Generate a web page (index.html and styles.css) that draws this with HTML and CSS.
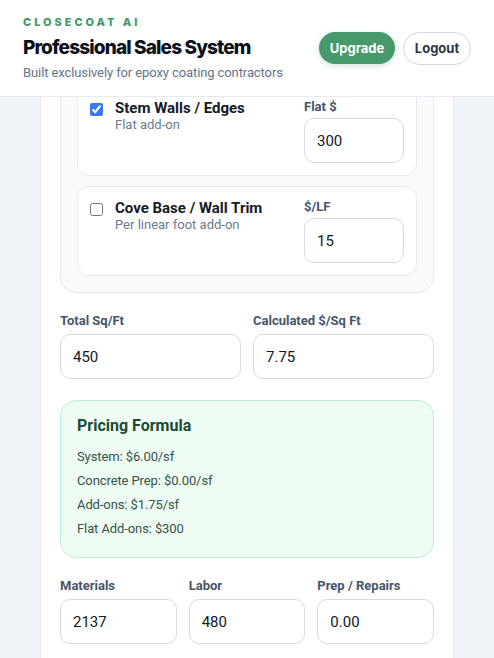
FILE: index.html
```html
<!DOCTYPE html>
<html lang="en">
<head>
<meta charset="utf-8">
<title>CloseCoat AI</title>
<link rel="stylesheet" href="styles.css">
</head>
<body>
<header class="topbar">
  <div class="brand">
    <div class="eyebrow">CLOSECOAT AI</div>
    <h1 class="title">Professional Sales System</h1>
    <p class="subtitle">Built exclusively for epoxy coating contractors</p>
  </div>
  <div class="actions">
    <button class="btn btn-primary">Upgrade</button>
    <button class="btn btn-outline">Logout</button>
  </div>
</header>

<main class="page">
  <section class="card">
    <div class="addon-group">
      <div class="addon">
        <div class="addon-main">
          <input type="checkbox" class="check" checked>
          <div class="addon-text">
            <div class="addon-name">Stem Walls / Edges</div>
            <div class="addon-desc">Flat add-on</div>
          </div>
        </div>
        <div class="addon-field">
          <label class="field-label">Flat $</label>
          <input class="input" type="text" value="300">
        </div>
      </div>
      <div class="addon">
        <div class="addon-main">
          <input type="checkbox" class="check">
          <div class="addon-text">
            <div class="addon-name">Cove Base / Wall Trim</div>
            <div class="addon-desc">Per linear foot add-on</div>
          </div>
        </div>
        <div class="addon-field">
          <label class="field-label">$/LF</label>
          <input class="input" type="text" value="15">
        </div>
      </div>
    </div>

    <div class="grid grid-2">
      <div class="field">
        <label class="field-label">Total Sq/Ft</label>
        <input class="input" type="text" value="450">
      </div>
      <div class="field">
        <label class="field-label">Calculated $/Sq Ft</label>
        <input class="input" type="text" value="7.75">
      </div>
    </div>

    <div class="formula">
      <h2 class="formula-title">Pricing Formula</h2>
      <p class="formula-line">System: $6.00/sf</p>
      <p class="formula-line">Concrete Prep: $0.00/sf</p>
      <p class="formula-line">Add-ons: $1.75/sf</p>
      <p class="formula-line">Flat Add-ons: $300</p>
    </div>

    <div class="grid grid-3">
      <div class="field">
        <label class="field-label">Materials</label>
        <input class="input" type="text" value="2137">
      </div>
      <div class="field">
        <label class="field-label">Labor</label>
        <input class="input" type="text" value="480">
      </div>
      <div class="field">
        <label class="field-label">Prep / Repairs</label>
        <input class="input" type="text" value="0.00">
      </div>
    </div>
  </section>
</main>
</body>
</html>
```

FILE: styles.css
```css
* { box-sizing: border-box; }

html, body {
  margin: 0;
  padding: 0;
}

body {
  background: #f0f3f8;
  font-family: Roboto, Inter, "Noto Sans", "Liberation Sans", sans-serif;
  color: #0f172a;
  overflow: hidden;
}

.topbar {
  position: fixed;
  top: 0;
  left: 0;
  right: 0;
  z-index: 10;
  height: 97px;
  background: #ffffff;
  border-bottom: 1px solid #e5e9f0;
  display: flex;
  align-items: center;
  justify-content: space-between;
  padding: 0 23px;
}

.brand {
  display: flex;
  flex-direction: column;
  padding-top: 1px;
}

.eyebrow {
  font-family: Inter, sans-serif;
  font-size: 11px;
  line-height: 14px;
  font-weight: 800;
  letter-spacing: 0.27em;
  color: #3f9a64;
}

.title {
  margin: 7px 0 0;
  font-family: Inter, sans-serif;
  font-size: 19px;
  line-height: 24px;
  font-weight: 800;
  letter-spacing: -0.045em;
  color: #0b1020;
}

.subtitle {
  margin: 4px 0 0;
  font-size: 13px;
  line-height: 18px;
  letter-spacing: -0.1px;
  color: #64748b;
}

.actions {
  display: flex;
  gap: 8px;
  align-items: center;
}

.btn {
  font-family: Inter, sans-serif;
  font-size: 13px;
  font-weight: 700;
  height: 32px;
  border-radius: 999px;
  padding: 0;
  cursor: pointer;
}

.btn-primary {
  background: #47986a;
  color: #ffffff;
  border: none;
  width: 76px;
  box-shadow: 0 2px 6px rgba(71, 152, 106, 0.25);
}

.btn-outline {
  background: #ffffff;
  color: #2d3648;
  border: 1px solid #cfd6e2;
  height: 33px;
  width: 68px;
}

.page {
  padding: 49px 40px 0;
}

.card {
  background: #ffffff;
  border-left: 1px solid #e6eaf1;
  border-right: 1px solid #e6eaf1;
  padding: 20px 19px 40px;
}

.addon-group {
  background: #f8fafc;
  border: 1px solid #e4e8ef;
  border-radius: 16px;
  padding: 16px;
  display: flex;
  flex-direction: column;
  gap: 10px;
}

.addon {
  background: #ffffff;
  border: 1px solid #e4e8ef;
  border-radius: 12px;
  padding: 12px;
  display: flex;
  justify-content: space-between;
  gap: 12px;
}

.addon-main {
  display: flex;
  align-items: flex-start;
  gap: 12px;
}

.check {
  margin: 4px 0 0;
  width: 13px;
  height: 13px;
  accent-color: #3b78f5;
  flex-shrink: 0;
}

.addon-name {
  font-size: 15px;
  line-height: 18px;
  font-weight: 700;
  color: #141a26;
}

.addon-desc {
  font-size: 13px;
  line-height: 16px;
  color: #6b7a90;
}

.addon-field {
  width: 100px;
  display: flex;
  flex-direction: column;
  gap: 3px;
}

.field-label {
  font-size: 13px;
  line-height: 16px;
  font-weight: 700;
  color: #475569;
}

.input {
  display: block;
  width: 100%;
  height: 45px;
  border: 1px solid #d3dae6;
  border-radius: 10px;
  background: #ffffff;
  padding: 0 12px;
  font-family: inherit;
  font-size: 15px;
  color: #111827;
  outline: none;
}

.grid {
  display: grid;
  gap: 12px;
  margin-top: 20px;
}

.grid-2 { grid-template-columns: 1fr 1fr; }
.grid-3 { grid-template-columns: 1fr 1fr 1fr; }

.field {
  display: flex;
  flex-direction: column;
  gap: 5px;
}

.formula {
  margin-top: 21px;
  background: #effcf4;
  border: 1px solid #bdf0cf;
  border-radius: 16px;
  padding: 16px;
}

.formula-title {
  margin: 0 0 10px;
  font-size: 16px;
  line-height: 18px;
  font-weight: 700;
  color: #1c4a32;
}

.formula-line {
  margin: 0;
  font-size: 13px;
  line-height: 24px;
  letter-spacing: -0.1px;
  color: #34524a;
}
```
